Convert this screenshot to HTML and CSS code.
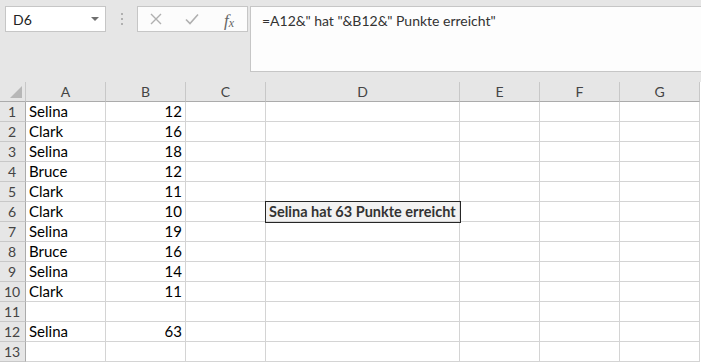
FILE: index.html
```html
<!doctype html>
<html>
<head>
<meta charset="utf-8">
<title>Mappe1 - Excel</title>
<link rel="stylesheet" href="styles.css">
</head>
<body>
<div class="toolbar">
    <div class="namebox">
        <span>D6</span>
        <span class="arrow"></span>
    </div>
    <div class="grip"><i></i><i></i><i></i></div>
    <div class="buttons">
        <svg class="btn" width="14" height="14" viewBox="0 0 14 14"><path d="M2 2L12 12M12 2L2 12" stroke="#b0b0b0" stroke-width="1.4" fill="none"/></svg>
        <svg class="btn" width="16" height="14" viewBox="0 0 16 14"><path d="M2 7.5L6 11.5L14 2.5" stroke="#b0b0b0" stroke-width="1.6" fill="none"/></svg>
        <span class="fx">f<sub>x</sub></span>
    </div>
    <div class="formula">=A12&amp;" hat "&amp;B12&amp;" Punkte erreicht"</div>
</div>

<div class="sheet">
    <div class="hd corner"><span class="tri"></span></div>
    <div class="hd">A</div><div class="hd">B</div><div class="hd">C</div><div class="hd">D</div><div class="hd">E</div><div class="hd">F</div><div class="hd">G</div>

    <div class="rh">1</div><div class="c">Selina</div><div class="c num">12</div><div class="c"></div><div class="c"></div><div class="c"></div><div class="c"></div><div class="c"></div>
    <div class="rh">2</div><div class="c">Clark</div><div class="c num">16</div><div class="c"></div><div class="c"></div><div class="c"></div><div class="c"></div><div class="c"></div>
    <div class="rh">3</div><div class="c">Selina</div><div class="c num">18</div><div class="c"></div><div class="c"></div><div class="c"></div><div class="c"></div><div class="c"></div>
    <div class="rh">4</div><div class="c">Bruce</div><div class="c num">12</div><div class="c"></div><div class="c"></div><div class="c"></div><div class="c"></div><div class="c"></div>
    <div class="rh">5</div><div class="c">Clark</div><div class="c num">11</div><div class="c"></div><div class="c"></div><div class="c"></div><div class="c"></div><div class="c"></div>
    <div class="rh">6</div><div class="c">Clark</div><div class="c num">10</div><div class="c"></div><div class="c sel">Selina hat 63 Punkte erreicht</div><div class="c"></div><div class="c"></div><div class="c"></div>
    <div class="rh">7</div><div class="c">Selina</div><div class="c num">19</div><div class="c"></div><div class="c"></div><div class="c"></div><div class="c"></div><div class="c"></div>
    <div class="rh">8</div><div class="c">Bruce</div><div class="c num">16</div><div class="c"></div><div class="c"></div><div class="c"></div><div class="c"></div><div class="c"></div>
    <div class="rh">9</div><div class="c">Selina</div><div class="c num">14</div><div class="c"></div><div class="c"></div><div class="c"></div><div class="c"></div><div class="c"></div>
    <div class="rh">10</div><div class="c">Clark</div><div class="c num">11</div><div class="c"></div><div class="c"></div><div class="c"></div><div class="c"></div><div class="c"></div>
    <div class="rh">11</div><div class="c"></div><div class="c"></div><div class="c"></div><div class="c"></div><div class="c"></div><div class="c"></div><div class="c"></div>
    <div class="rh">12</div><div class="c">Selina</div><div class="c num">63</div><div class="c"></div><div class="c"></div><div class="c"></div><div class="c"></div><div class="c"></div>
    <div class="rh">13</div><div class="c"></div><div class="c"></div><div class="c"></div><div class="c"></div><div class="c"></div><div class="c"></div><div class="c"></div>
</div>
</body>
</html>
```

FILE: styles.css
```css
html,body{margin:0;padding:0;}
body{background:#fff;font-family:Lato,"Open Sans",sans-serif;color:#000;overflow:hidden;width:701px;height:362px;}

.toolbar{display:flex;align-items:flex-start;height:82px;background:#e6e6e6;padding:6px 0 0 5px;box-sizing:border-box;}
.namebox{width:101px;height:26px;box-sizing:border-box;background:#fff;border:1px solid #c6c6c6;display:flex;align-items:center;justify-content:space-between;padding:0 6px 0 7px;font-size:14px;color:#222;}
.namebox .arrow{width:0;height:0;border-left:4px solid transparent;border-right:4px solid transparent;border-top:4px solid #6f6f6f;margin-top:-1px;}
.grip{width:31px;display:flex;flex-direction:column;align-items:center;gap:3px;padding-top:7px;}
.grip i{display:block;width:2px;height:2px;background:#b0b0b0;}
.buttons{width:111px;height:26px;box-sizing:border-box;background:#fcfcfc;border:1px solid #c6c6c6;display:flex;align-items:center;padding:0 0 0 11px;}
.buttons .btn{margin-right:21px;}
.fx{font-family:"Liberation Serif",serif;font-style:italic;font-size:17px;line-height:17px;color:#666;margin-left:3px;margin-top:2px;}
.fx sub{font-size:12px;line-height:0;vertical-align:-1px;}
.formula{flex:1;height:66px;margin-left:2px;box-sizing:border-box;background:#fdfdfd;border:1px solid #c6c6c6;border-right:none;padding:5px 0 0 11px;font-size:14px;color:#333;}

.sheet{display:grid;grid-template-columns:26px 80px 80px 80px 194px 80px 80px 80px;grid-auto-rows:20px;}
.hd,.rh{background:#e6e6e6;color:#444;font-size:14px;display:flex;align-items:center;justify-content:center;box-sizing:border-box;}
.hd{border-right:1px solid #c8c8c8;border-bottom:1px solid #ababab;}
.rh{border-right:1px solid #ababab;border-bottom:1px solid #c8c8c8;padding-right:1px;}
.corner{position:relative;}
.tri{position:absolute;right:3px;bottom:3px;width:0;height:0;border-left:12px solid transparent;border-bottom:12px solid #b7b7b7;}
.c{box-sizing:border-box;border-right:1px solid #d4d4d4;border-bottom:1px solid #d4d4d4;font-size:15px;line-height:19px;padding:0 3px;white-space:nowrap;}
.num{text-align:right;}
.sel{position:relative;background:#f2f2f2;outline:1px solid #262626;font-weight:bold;font-size:14.5px;color:#333;z-index:1;}
```
